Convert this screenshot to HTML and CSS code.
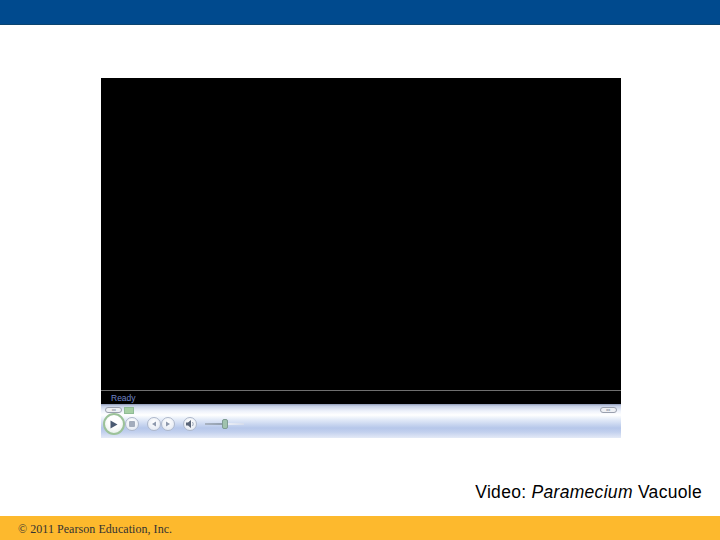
FILE: index.html
```html
<!DOCTYPE html>
<html>
	<head>
		<meta charset="utf-8">
		<title>Video: Paramecium Vacuole</title>
		<link rel="stylesheet" href="styles.css">
	</head>
	<body>
		<div class="topbar"></div>
		<div class="main">
			<div class="player">
				<div class="screen"></div>
				<div class="status">Ready</div>
				<div class="controls">
					<div class="seek">
						<div class="seekleft">
							<span class="pill">&#9666;&#9666;</span>
							<span class="green"></span>
						</div>
						<span class="pill">&#9656;&#9656;</span>
					</div>
					<div class="btns">
						<span class="btn play">
							<svg width="8" height="9" viewBox="0 0 8 9"><path d="M0.5 0.5 L7.5 4.5 L0.5 8.5 Z" fill="#4a5a72"/></svg>
						</span>
						<span class="btn stop">
							<svg width="6" height="6" viewBox="0 0 6 6"><rect width="6" height="6" rx="1" fill="#a3acbc"/></svg>
						</span>
						<span class="btn prev">
							<svg width="6" height="6" viewBox="0 0 6 6"><path d="M5 0.5 L1 3 L5 5.5 Z" fill="#8d98ac"/></svg>
						</span>
						<span class="btn next">
							<svg width="6" height="6" viewBox="0 0 6 6"><path d="M1 0.5 L5 3 L1 5.5 Z" fill="#8d98ac"/></svg>
						</span>
						<span class="btn mute">
							<svg width="9" height="8" viewBox="0 0 9 8"><path d="M0 2.5 H2 L5 0 V8 L2 5.5 H0 Z" fill="#5a6578"/><path d="M6.5 2 Q8 4 6.5 6" stroke="#9aa5b6" fill="none"/></svg>
						</span>
						<div class="volume">
							<span class="thumb"></span>
						</div>
					</div>
				</div>
			</div>
			<p class="caption">Video: <i>Paramecium</i> Vacuole</p>
		</div>
		<div class="footer">© 2011 Pearson Education, Inc.</div>
	</body>
</html>
```

FILE: styles.css
```css
* {
	margin: 0;
	padding: 0;
	box-sizing: border-box;
}

html,body{
	height: 100%;
	background: #fff;
	overflow: hidden;
}

body {
	display: flex;
	flex-direction: column;
}

.topbar {
	height: 25px;
	background: #004a8e;
	border-bottom: 1px solid #0b4470;
}

.main {
	flex: 1;
	padding: 53px 18px 0 101px;
}

.player {
	width: 520px;
}

.screen {
	height: 313px;
	background: #000;
	border-bottom: 1px solid #6f6f6f;
}

.status {
	height: 13px;
	background: #000;
	color: #7186c8;
	font: 8.5px/14px "Liberation Sans", sans-serif;
	padding-left: 10px;
}

.controls {
	height: 34px;
	padding-top: 3px;
	background: linear-gradient(to bottom, #8c97b4 0, #c6d0e6 2px, #eef2fb 7px, #fff 11px, #e6edf9 15px, #b6c7ea 24px, #c2d0ee 28px, #e4eaf7 34px);
}

.seek {
	display: flex;
	justify-content: space-between;
	align-items: center;
	height: 6px;
	padding: 0 4px;
}

.seekleft {
	display: flex;
	align-items: center;
	gap: 2px;
}

.pill {
	width: 17px;
	height: 6px;
	border: 1px solid #9aa0ae;
	border-radius: 3px;
	background: #eef0f4;
	color: #8a90a0;
	font: 4px/4px "DejaVu Sans", sans-serif;
	text-align: center;
	overflow: hidden;
}

.green {
	width: 10px;
	height: 7px;
	background: #a6cfa4;
	border: 1px solid #8fbc95;
}

.btns {
	display: flex;
	align-items: center;
	height: 22px;
	padding-left: 2px;
}

.btn {
	display: flex;
	align-items: center;
	justify-content: center;
	width: 14px;
	height: 14px;
	border-radius: 50%;
	border: 1px solid #aeb8cb;
	background: radial-gradient(circle at 50% 35%, #fff, #dfe5f0);
}

.play {
	width: 22px;
	height: 22px;
	border: 2px solid #9cc299;
	background: radial-gradient(circle at 50% 35%, #fff 40%, #dfeae5);
}

.prev {
	margin-left: 8px;
}

.mute {
	margin-left: 8px;
}

.volume {
	display: flex;
	align-items: center;
	justify-content: center;
	width: 39px;
	height: 2px;
	margin-left: 8px;
	background: linear-gradient(to right, #a9b3c2 0, #8f9cac 50%, #eef1f8 52%, #d5dcec 100%);
}

.thumb {
	flex: none;
	width: 6px;
	height: 10px;
	background: #a0c3ae;
	border: 1px solid #7f9c93;
	border-radius: 2px;
}

.caption {
	margin-top: 44px;
	text-align: right;
	font: 17.5px/20px "Liberation Sans", sans-serif;
	letter-spacing: 0.3px;
	color: #000;
}

.footer {
	height: 24px;
	background: #fdb92d;
	color: #333;
	font: 12px/26px "Liberation Serif", serif;
	letter-spacing: 0.05px;
	padding-left: 18px;
}
```
